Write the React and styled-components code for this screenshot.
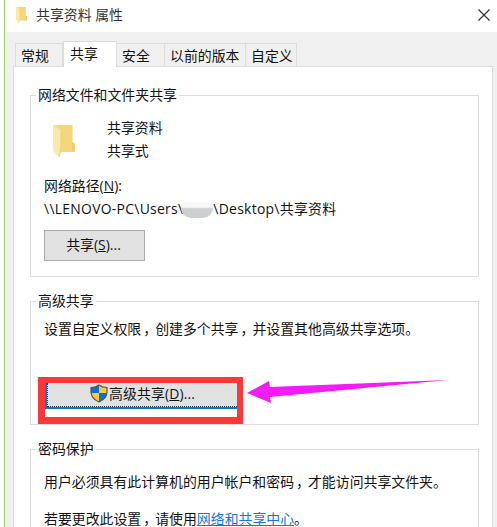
import React from "react";
import styled, { createGlobalStyle } from "styled-components";

const GlobalStyle = createGlobalStyle`
  * {
    box-sizing: border-box;
  }

  body {
    margin: 0;
    overflow: hidden;
    background: #ffffff;
  }
`;

const Page = styled.div`
  width: 497px;
  height: 527px;
  padding-left: 4px;
  overflow: hidden;
  background: #ffffff;
`;

const Dialog = styled.div`
  height: 100%;
  display: flex;
  flex-direction: column;
  border-left: 1px solid #9fce63;
  background: #f0f0f0;
  color: #111111;
  font-family: "Open Sans", "Noto Sans CJK SC", sans-serif;
  font-size: 13.9px;
  line-height: 20px;
  white-space: nowrap;
`;

const TitleBar = styled.div`
  height: 32px;
  flex-shrink: 0;
  display: flex;
  align-items: center;
  padding: 0 7px 3px 11px;
  background: #ffffff;
  color: #333333;

  svg {
    display: block;
  }
`;

const Title = styled.span`
  flex: 1;
  margin-left: 9px;
`;

const Tabs = styled.div`
  height: 34px;
  flex-shrink: 0;
  display: flex;
  align-items: flex-end;
  padding-left: 10px;
`;

const Tab = styled.div`
  position: relative;
  z-index: ${(props) => (props.$active ? 2 : 0)};
  width: ${(props) => props.$width}px;
  height: ${(props) => (props.$active ? 26 : 23)}px;
  padding: ${(props) => (props.$active ? "2px 0 0 6px" : "2px 0 0 5px")};
  border: 1px solid #dcdcdc;
  border-bottom: none;
  border-left-width: ${(props) => (props.$joined ? 0 : 1)}px;
  background: ${(props) => (props.$active ? "#ffffff" : "#f0f0f0")};
  margin-bottom: ${(props) => (props.$active ? -1 : 0)}px;
`;

const Panel = styled.div`
  flex: 1;
  min-height: 0;
  margin: 0 4px 0 8px;
  padding: 18px 13px 0 16px;
  border: 1px solid #dcdcdc;
  border-bottom: none;
  background: #ffffff;
`;

const Group = styled.fieldset`
  position: relative;
  height: ${(props) => props.$height}px;
  min-width: 0;
  margin: 0 0 ${(props) => props.$gap || 0}px;
  padding: 0 0 0 13px;
  border: 1px solid #dcdcdc;

  legend {
    height: 20px;
    margin-left: -8px;
    padding: 0 2px;
  }
`;

const FolderRow = styled.div`
  height: 58px;
  display: flex;
  padding: 11px 0 0 9px;

  svg {
    margin-top: 9px;
  }
`;

const FolderInfo = styled.div`
  margin-left: 32px;
  line-height: 23px;
`;

const Text = styled.p`
  height: 20px;
  margin: ${(props) => props.$top || 0}px 0 0;
`;

const LastText = styled(Text)`
  height: 16px;
  line-height: 16px;
`;

const Comma = styled.span`
  margin: 0 -2px 0 2px;
`;

const Path = styled(Text)`
  display: flex;
  align-items: center;
  letter-spacing: 0.29px;
`;

const Smudge = styled.span`
  width: 32px;
  height: 16px;
  margin: 2px 0 0 -2px;
  border-radius: 4px 6px 10px 10px;
  background: linear-gradient(#f8f8f8 0 32%, #cdcfd1 42%);
`;

const Button = styled.button`
  width: 101px;
  height: 31px;
  display: block;
  margin: 11px 0 0;
  padding: 0 2px 1px 0;
  border: 1px solid #adadad;
  background: #e1e1e1;
  color: inherit;
  font: inherit;
`;

const Highlight = styled.div`
  position: absolute;
  top: 66px;
  left: 7px;
  width: 205px;
  height: 47px;
  border: solid #fd3838;
  border-width: 6px 6px 7px 7px;
  background: #ffffff;
`;

const FocusedButton = styled(Button)`
  width: 192px;
  height: 26px;
  margin: 0;
  padding: 0;
  border: solid #0078d7;
  border-width: 0 0 2px 2px;
`;

const FocusRing = styled.span`
  width: 100%;
  height: 24px;
  display: flex;
  align-items: center;
  justify-content: center;
  padding: 0 0 2px;
  border: dotted #333333;
  border-width: 0 0 1px 1px;
  letter-spacing: 0.1px;

  svg {
    margin-right: 1px;
  }
`;

const Arrow = styled.svg`
  position: absolute;
  top: 68px;
  left: 216px;
`;

const Link = styled.a`
  color: #1677d2;
  text-decoration: underline;
  text-underline-offset: 1px;
`;

function FolderIcon({ width, height }) {
  return (
    <svg width={width} height={height} viewBox="0 0 22 32" preserveAspectRatio="none">
      <path d="M1 0H19.5V17L22 19V26Q22 27 21 27H5Z" fill="#f4d67c" />
      <path d="M19.5 17L22 19V26L19 27Z" fill="#efcb6b" />
      <path d="M0 0L8 5V22L6 32L1 27Q0 26 0 24Z" fill="#fee8a5" />
      <path d="M8 5V24L6 32" fill="none" stroke="#ecc967" strokeWidth="0.8" />
    </svg>
  );
}

function ShieldIcon() {
  return (
    <svg width="18" height="19" viewBox="0 0 18 19">
      <path d="M9 1C7 2.7 4.4 3.5 1 3.5V9H9Z" fill="#0870cf" />
      <path d="M9 1C11 2.7 13.6 3.5 17 3.5V9H9Z" fill="#ffc43d" />
      <path d="M1 9C1.3 13 4.5 16 9 18V9Z" fill="#ffc43d" />
      <path d="M17 9C16.7 13 13.5 16 9 18V9Z" fill="#0870cf" />
      <path
        d="M9 1C7 2.7 4.4 3.5 1 3.5V8C1 13 4.5 16 9 18C13.5 16 17 13 17 8V3.5C13.6 3.5 11 2.7 9 1Z"
        fill="none"
        stroke="#55564f"
        strokeWidth="1.2"
      />
    </svg>
  );
}

export default function App() {
  return (
    <Page>
      <GlobalStyle />
      <Dialog>
        <TitleBar>
          <FolderIcon width={11} height={16} />
          <Title>共享资料 属性</Title>
          <svg width="12" height="12" viewBox="0 0 12 12">
            <path d="M.5 .5L11.5 11.5M11.5 .5L.5 11.5" stroke="#333333" strokeWidth="1.2" />
          </svg>
        </TitleBar>
        <Tabs>
          <Tab $width={48}>常规</Tab>
          <Tab $width={54} $active>共享</Tab>
          <Tab $width={48} $joined>安全</Tab>
          <Tab $width={81} $joined>以前的版本</Tab>
          <Tab $width={51} $joined>自定义</Tab>
        </Tabs>
        <Panel>
          <Group $height={192} $gap={14}>
            <legend>网络文件和文件夹共享</legend>
            <FolderRow>
              <FolderIcon width={22} height={32} />
              <FolderInfo>
                <div>共享资料</div>
                <div>共享式</div>
              </FolderInfo>
            </FolderRow>
            <Text $top={13}>网络路径(<u>N</u>):</Text>
            <Path $top={3}>
              <span>\\LENOVO-PC\Users\</span>
              <Smudge />
              <span>\Desktop\共享资料</span>
            </Path>
            <Button>共享(<u>S</u>)...</Button>
          </Group>
          <Group $height={134} $gap={14}>
            <legend>高级共享</legend>
            <Text $top={8}>
              设置自定义权限<Comma>，</Comma>创建多个共享<Comma>，</Comma>并设置其他高级共享选项。
            </Text>
            <Highlight>
              <FocusedButton>
                <FocusRing>
                  <ShieldIcon />
                  <span>高级共享(<u>D</u>)...</span>
                </FocusRing>
              </FocusedButton>
            </Highlight>
            <Arrow width="204" height="26" viewBox="0 0 204 26">
              <path d="M0 14L22 2L23 8L201 1L23 18L24 24Z" fill="#f41cf4" />
            </Arrow>
          </Group>
          <Group $height={140}>
            <legend>密码保护</legend>
            <Text $top={13}>
              用户必须具有此计算机的用户帐户和密码<Comma>，</Comma>才能访问共享文件夹。
            </Text>
            <LastText $top={19}>
              若要更改此设置<Comma>，</Comma>请使用<Link>网络和共享中心</Link>。
            </LastText>
          </Group>
        </Panel>
      </Dialog>
    </Page>
  );
}
